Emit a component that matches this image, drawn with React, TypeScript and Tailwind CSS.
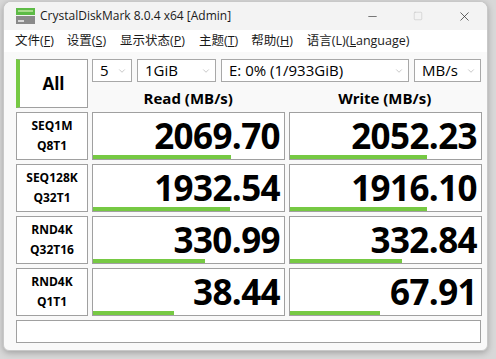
import { ChevronDown, Minus, Square, X } from 'lucide-react';

const rows = [
  { l1: 'SEQ1M', l2: 'Q8T1', read: '2069.70', write: '2052.23', rb: 138, wb: 137 },
  { l1: 'SEQ128K', l2: 'Q32T1', read: '1932.54', write: '1916.10', rb: 137, wb: 137 },
  { l1: 'RND4K', l2: 'Q32T16', read: '330.99', write: '332.84', rb: 112, wb: 112 },
  { l1: 'RND4K', l2: 'Q1T1', read: '38.44', write: '67.91', rb: 81, wb: 90 },
];

function Select({ label, width }: { label: string; width: string }) {
  return (
    <div className={`${width} h-[23px] flex items-center justify-between border border-[#a8a8a8] bg-white pl-[7px] pr-[4px] text-[15px] text-black`}>
      <span className="leading-none">{label}</span>
      <ChevronDown className="w-[10px] h-[10px] text-[#9a9a9a]" strokeWidth={1.3} />
    </div>
  );
}

function Score({ value, bar }: { value: string; bar: number }) {
  return (
    <div className="relative h-[48px] border border-[#a0a0a0] bg-white flex items-center justify-end pr-[4px]">
      <span className="text-[35px] font-bold leading-none tracking-[-0.6px] text-black mb-[2px]">{value}</span>
      <div className="absolute left-0 bottom-0 h-[4px] bg-[#76c943]" style={{ width: bar }} />
    </div>
  );
}

export default function App() {
  return (
    <div className="w-[496px] h-[359px] bg-[#d8d8d8] overflow-hidden pt-[1px] pl-[3px]" style={{ fontFamily: '"Open Sans", "Noto Sans", "Noto Sans CJK SC", sans-serif' }}>
      <div className="w-[485px] h-[350px] rounded-t-[8px] rounded-b-[6px] border border-[#c8c8c8] bg-[#f9f9f9] overflow-hidden shadow-[0_2px_6px_rgba(0,0,0,0.25)]">
        {/* title bar */}
        <div className="h-[28px] bg-[#f3f3f3] flex items-center">
          <svg width="19" height="16" viewBox="0 0 19 16" className="ml-[12px]">
            <rect x="0" y="0" width="19" height="7" fill="#5dbb46" />
            <rect x="2" y="2" width="15" height="2" fill="#a8dc8c" />
            <rect x="0" y="8" width="19" height="8" fill="#8a8a8a" />
            <rect x="2" y="12" width="6" height="2" fill="#d8d8d8" />
          </svg>
          <span className="ml-[5px] text-[12px] text-[#1a1a1a]">CrystalDiskMark 8.0.4 x64 [Admin]</span>
          <div className="ml-auto flex items-center">
            <div className="w-[46px] flex justify-center"><Minus className="w-[13px] h-[13px] text-[#333]" strokeWidth={1.2} /></div>
            <div className="w-[46px] flex justify-center"><Square className="w-[10px] h-[10px] text-[#c8c8c8]" strokeWidth={1.5} /></div>
            <div className="w-[46px] flex justify-center"><X className="w-[15px] h-[15px] text-[#333]" strokeWidth={1.2} /></div>
          </div>
        </div>
        {/* menu bar */}
        <div className="h-[22px] bg-white flex items-center text-[12.5px] text-[#1a1a1a] pl-[11px]">
          <span className="mr-[13px]">文件(<u>F</u>)</span>
          <span className="mr-[14px]">设置(<u>S</u>)</span>
          <span className="mr-[14px]">显示状态(<u>P</u>)</span>
          <span className="mr-[13px]">主题(<u>T</u>)</span>
          <span className="mr-[14px]">帮助(<u>H</u>)</span>
          <span>语言(L)(<u>L</u>anguage)</span>
        </div>
        {/* content */}
        <div className="pl-[12px] pt-[7px] flex flex-col gap-[4px]">
          <div className="flex gap-[4px] h-[49px]">
            <div className="w-[72px] h-[49px] border border-[#a0a0a0] bg-white border-l-[4px] border-l-[#76c943] flex items-center justify-center text-[17px] font-bold text-black">
              All
            </div>
            <div className="flex flex-col w-[389px]">
              <div className="flex gap-[5px]">
                <Select label="5" width="w-[40px]" />
                <Select label="1GiB" width="w-[79px]" />
                <Select label="E: 0% (1/933GiB)" width="w-[188px]" />
                <Select label="MB/s" width="w-[67px]" />
              </div>
              <div className="flex mt-[6px] text-[15px] font-bold text-black leading-[20px]">
                <div className="w-[193px] text-center">Read (MB/s)</div>
                <div className="w-[4px]" />
                <div className="w-[193px] text-center">Write (MB/s)</div>
              </div>
            </div>
          </div>
          {rows.map((r, i) => (
            <div key={i} className="flex gap-[4px]">
              <div className="w-[72px] h-[48px] border border-[#a0a0a0] bg-white flex flex-col items-center justify-center text-[12px] font-bold leading-[20px] text-black">
                <span>{r.l1}</span>
                <span>{r.l2}</span>
              </div>
              <div className="w-[193px]"><Score value={r.read} bar={r.rb} /></div>
              <div className="w-[193px]"><Score value={r.write} bar={r.wb} /></div>
            </div>
          ))}
          <div className="w-[465px] h-[23px] border border-[#a0a0a0] bg-white" />
        </div>
      </div>
    </div>
  );
}
